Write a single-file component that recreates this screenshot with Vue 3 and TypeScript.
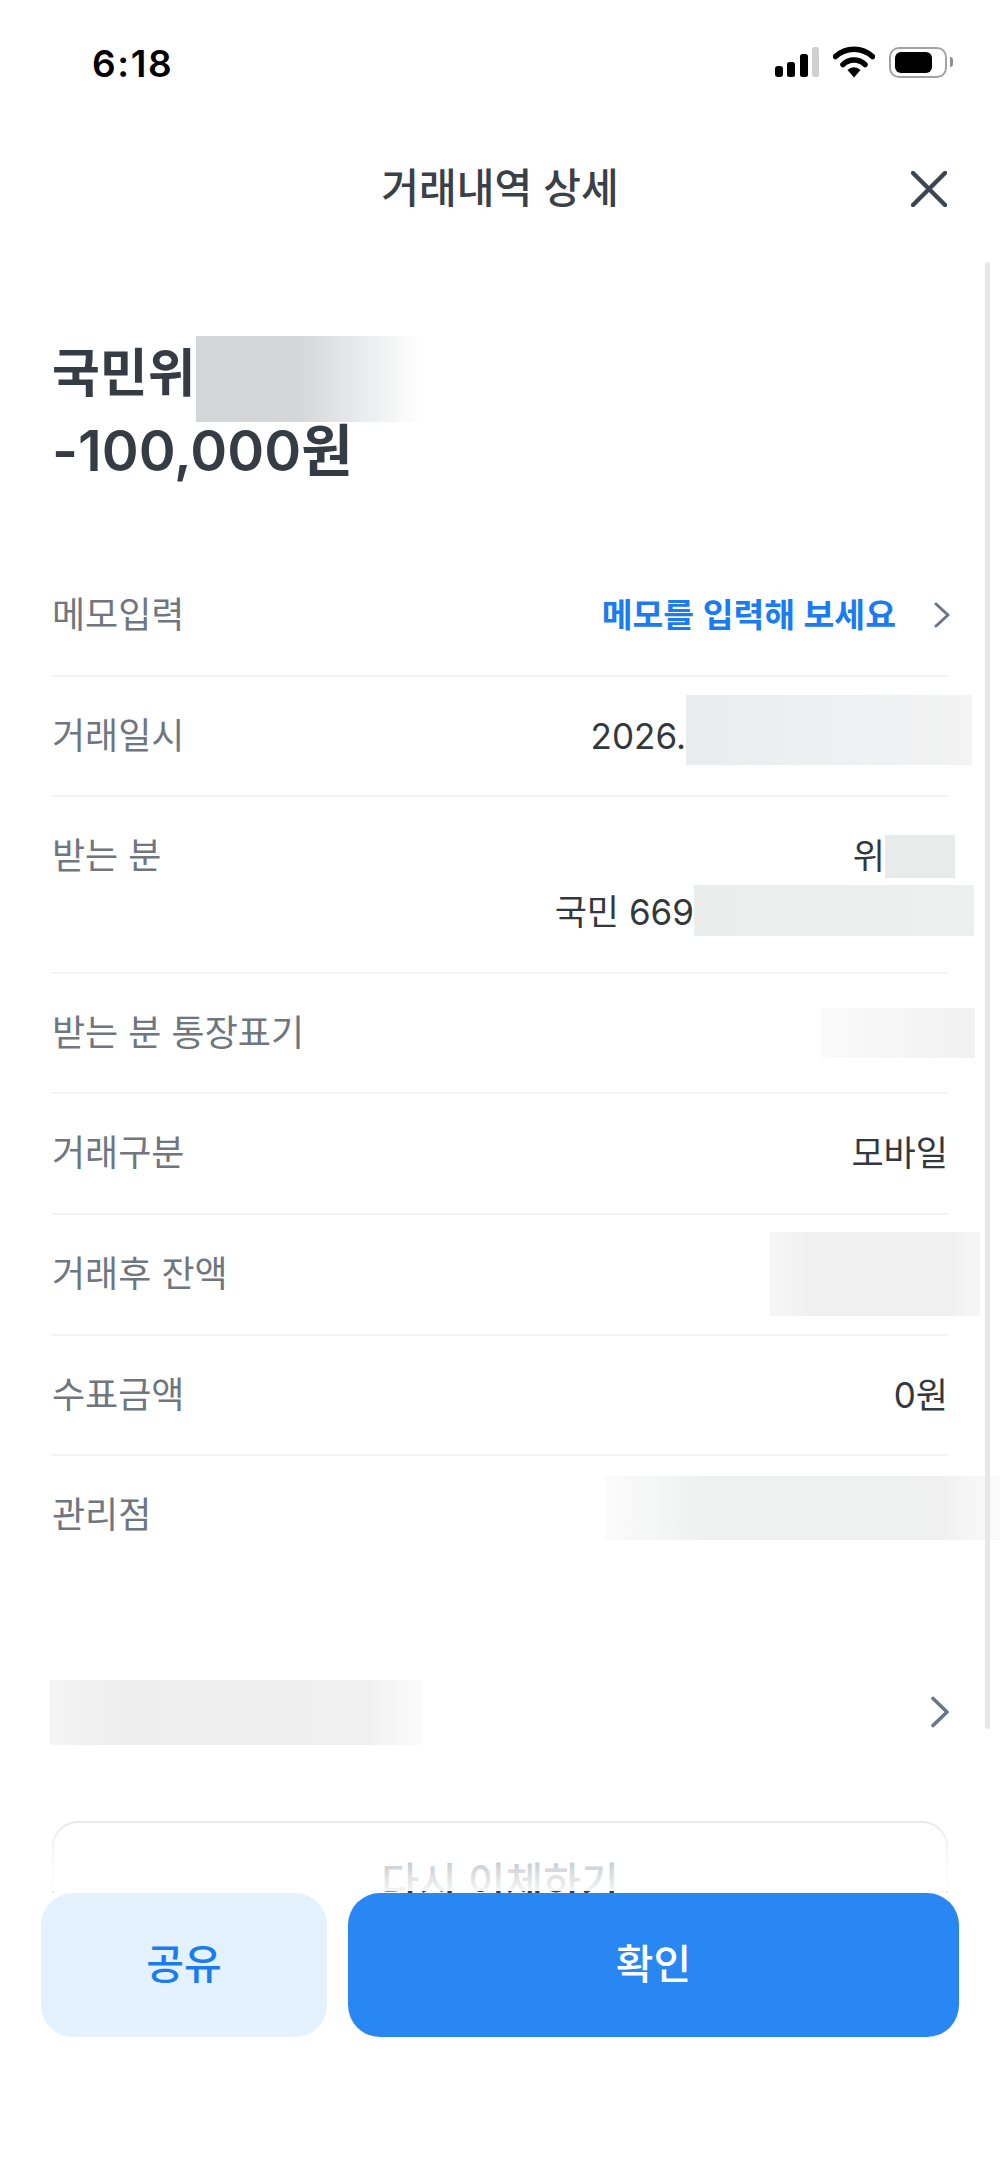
<script setup lang="ts">
interface ValueLine {
  text?: string
  smudge?: string
}

interface DetailRow {
  label: string
  lines: ValueLine[]
}

const rows: DetailRow[] = [
  { label: '거래일시', lines: [{ text: '2026.', smudge: 's-date' }] },
  {
    label: '받는 분',
    lines: [
      { text: '위', smudge: 's-name' },
      { text: '국민 669', smudge: 's-account' },
    ],
  },
  { label: '받는 분 통장표기', lines: [{ smudge: 's-memo' }] },
  { label: '거래구분', lines: [{ text: '모바일' }] },
  { label: '거래후 잔액', lines: [{ smudge: 's-balance' }] },
  { label: '수표금액', lines: [{ text: '0원' }] },
  { label: '관리점', lines: [{ smudge: 's-branch' }] },
]
</script>

<template>
  <div class="screen">
    <div class="status-bar">
      <span class="time">6:18</span>
      <div class="status-icons">
        <svg class="signal" width="44" height="32" viewBox="0 0 44 32">
          <rect x="0" y="19" width="8" height="11" rx="3" fill="#000" />
          <rect x="12" y="15" width="8" height="15" rx="2.5" fill="#000" />
          <rect x="25" y="7" width="8" height="23" rx="2.5" fill="#000" />
          <rect x="37" y="0" width="7" height="30" rx="2.5" fill="#d0d0d0" />
        </svg>
        <svg class="wifi" width="42" height="32" viewBox="0 0 42 32">
          <path d="M2.5 10.5 A27 27 0 0 1 39.5 10.5" fill="none" stroke="#000" stroke-width="5.5" stroke-linecap="round" />
          <path d="M10 18.5 A16 16 0 0 1 32 18.5" fill="none" stroke="#000" stroke-width="5.5" stroke-linecap="round" />
          <path d="M14.5 24 A9 9 0 0 1 27.5 24 L21 31.5 Z" fill="#000" />
        </svg>
        <div class="battery"><div class="battery-level"></div></div>
        <div class="battery-cap"></div>
      </div>
    </div>

    <header class="top-bar">
      <h1 class="top-title">거래내역 상세</h1>
      <svg class="close" width="36" height="36" viewBox="0 0 36 36">
        <path d="M2 2 L34 34 M34 2 L2 34" stroke="#3d4650" stroke-width="4.4" stroke-linecap="round" fill="none" />
      </svg>
    </header>

    <main class="content">
      <div class="scrollbar"></div>

      <section class="summary">
        <div class="summary-line">국민위<span class="smudge s-title"></span></div>
        <div class="summary-line amount">-100,000원</div>
      </section>

      <div class="row">
        <span class="label">메모입력</span>
        <div class="memo-link">
          <span>메모를 입력해 보세요</span>
          <svg width="16" height="26" viewBox="0 0 16 26">
            <path d="M2 2 L14 13 L2 24" stroke="#6b7684" stroke-width="3" stroke-linecap="round" stroke-linejoin="round" fill="none" />
          </svg>
        </div>
      </div>

      <div v-for="row in rows" :key="row.label" class="row">
        <span class="label">{{ row.label }}</span>
        <div class="values">
          <div v-for="(line, i) in row.lines" :key="i" class="value-line">
            <span v-if="line.text">{{ line.text }}</span>
            <span v-if="line.smudge" class="smudge" :class="line.smudge"></span>
          </div>
        </div>
      </div>

      <div class="link-row">
        <span class="smudge s-link"></span>
        <svg width="20" height="32" viewBox="0 0 20 32">
          <path d="M3 2.5 L17 16 L3 29.5" stroke="#6b7684" stroke-width="3.6" stroke-linecap="round" stroke-linejoin="round" fill="none" />
        </svg>
      </div>

      <div class="ghost-wrap">
        <button class="ghost-button">다시 이체하기</button>
        <div class="ghost-fade"></div>
      </div>
    </main>

    <footer class="actions">
      <button class="btn btn-share">공유</button>
      <button class="btn btn-ok">확인</button>
    </footer>
  </div>
</template>

<style scoped>
.screen {
  width: 1000px;
  height: 2165px;
  overflow: hidden;
  background: #fff;
  font-family: Inter, "Noto Sans CJK KR", sans-serif;
  color: #363c43;
}

.status-bar {
  height: 128px;
  box-sizing: border-box;
  padding: 44px 0 0 92px;
  display: flex;
  justify-content: space-between;
}
.time {
  font-size: 37px;
  line-height: 40px;
  font-weight: 600;
  letter-spacing: 1.6px;
  color: #000;
}
.status-icons {
  display: flex;
  align-items: flex-start;
  padding-top: 3px;
  padding-right: 47px;
}
.wifi {
  margin-left: 14px;
  margin-top: -1px;
}
.battery {
  width: 58px;
  height: 31px;
  box-sizing: border-box;
  margin-left: 14px;
  padding: 3px 4px;
  border: 2px solid #a2a2a2;
  border-radius: 10px;
}
.battery-level {
  width: 37px;
  height: 21px;
  background: #000;
  border-radius: 6px;
}
.battery-cap {
  width: 3px;
  height: 10px;
  margin: 10px 0 0 3px;
  background: #8f8f8f;
  border-radius: 0 3px 3px 0;
}

.top-bar {
  height: 120px;
  margin-bottom: 2px;
  position: relative;
  display: flex;
  justify-content: center;
  align-items: center;
}
.top-title {
  margin: 0;
  font-size: 41px;
  line-height: 50px;
  font-weight: 500;
  color: #3a4047;
}
.close {
  position: absolute;
  right: 53px;
  top: 43px;
}

.content {
  height: 1643px;
  position: relative;
  overflow: hidden;
  padding: 0 52px;
}
.scrollbar {
  position: absolute;
  left: 985px;
  top: 12px;
  width: 5px;
  height: 1467px;
  background: #e6e7e8;
  border-radius: 3px;
}

.summary {
  padding-top: 87px;
  height: 306px;
  box-sizing: border-box;
  font-size: 52px;
  line-height: 74px;
  font-weight: 600;
  color: #363c43;
}
.summary-line {
  display: flex;
  align-items: center;
  height: 74px;
  margin-bottom: 3px;
}
.amount {
  font-size: 56px;
}

.row {
  display: flex;
  justify-content: space-between;
  padding: 31px 0 31.6px;
  border-bottom: 2px solid #f2f4f6;
}
.row:nth-last-child(3) {
  border-bottom: none;
}
.label {
  font-size: 36px;
  line-height: 56px;
  color: #6f767e;
}
.values {
  font-size: 35px;
  line-height: 56px;
  color: #33383d;
}
.value-line {
  height: 56px;
  display: flex;
  justify-content: flex-end;
  align-items: center;
}
.memo-link {
  display: flex;
  align-items: center;
  gap: 38px;
  margin-right: -2px;
  font-size: 33.5px;
  line-height: 56px;
  font-weight: 600;
  color: #1b7bf0;
}

.smudge {
  display: block;
  flex: none;
}
.s-title {
  width: 226px;
  height: 86px;
  margin-top: 10px;
  background: linear-gradient(90deg, #d3d5d7 0%, #d4d6d8 45%, #fff 100%);
}
.s-date {
  width: 286px;
  height: 70px;
  margin-right: -24px;
  margin-top: -12px;
  background: linear-gradient(90deg, #e9ecef, #f3f3f3);
}
.s-name {
  width: 70px;
  height: 43px;
  margin-right: -7px;
  background: #e9eaea;
}
.s-account {
  width: 280px;
  height: 51px;
  margin-right: -26px;
  margin-top: -4px;
  background: linear-gradient(90deg, #ebecec, #eeefef);
}
.s-memo {
  width: 154px;
  height: 50px;
  margin-right: -27px;
  background: linear-gradient(90deg, #fafafa, #f1f1f1);
}
.s-balance {
  width: 210px;
  height: 84px;
  margin-right: -32px;
  background: linear-gradient(90deg, #f6f6f6, #f0f0f0 20%, #f0f0f0 85%, #f6f6f6);
}
.s-branch {
  width: 395px;
  height: 64px;
  margin-right: -52px;
  margin-top: -14px;
  background: linear-gradient(90deg, #fbfbfb, #eff0f0 25%, #f0f0f0 85%, #fbfbfb);
}

.link-row {
  margin-top: 105px;
  display: flex;
  justify-content: space-between;
  align-items: center;
  height: 65px;
}
.link-row svg {
  margin-right: -2px;
}
.s-link {
  width: 372px;
  height: 65px;
  margin-left: -2px;
  background: linear-gradient(90deg, #f4f4f4, #eeeeee 20%, #f0f0f0 85%, #fbfbfb);
}

.ghost-wrap {
  position: relative;
  margin-top: 76px;
}
.ghost-button {
  display: block;
  width: 100%;
  height: 116px;
  background: #fff;
  border: 2px solid #e5e8eb;
  border-radius: 26px;
  font-family: inherit;
  font-size: 41px;
  font-weight: 500;
  color: #333d4b;
  padding: 0;
}
.ghost-fade {
  position: absolute;
  left: -4px;
  right: -4px;
  top: 0;
  height: 70px;
  background: linear-gradient(180deg, rgba(255, 255, 255, 0.05), rgba(255, 255, 255, 0.75) 60%, rgba(255, 255, 255, 0.95));
}

.actions {
  display: flex;
  gap: 21px;
  padding: 0 41px;
}
.btn {
  height: 144px;
  border: none;
  border-radius: 32px;
  font-family: inherit;
  font-size: 41px;
  line-height: 48px;
  font-weight: 500;
  padding: 0 0 2px;
}
.btn-share {
  width: 286px;
  background: #e4f2ff;
  color: #1b7bf0;
}
.btn-ok {
  flex: 1;
  background: #2887f3;
  color: #fff;
}
</style>
